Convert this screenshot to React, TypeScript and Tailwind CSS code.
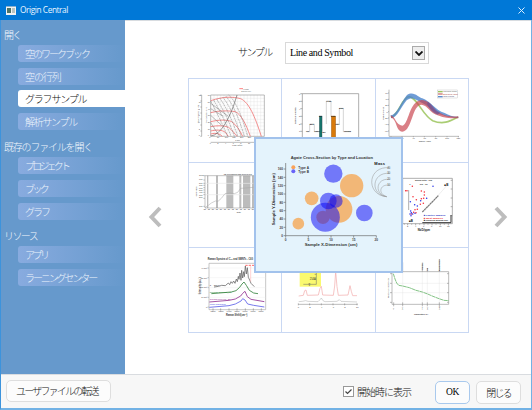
import React from 'react';

type Item = { label: string; gap: string; tracking: string; active?: boolean };

const openItems: Item[] = [
  { label: '空のワークブック', gap: 'mt-[3px]', tracking: 'tracking-[-2px]' },
  { label: '空の行列', gap: 'mt-[6px]', tracking: 'tracking-[-1.1px]' },
  { label: 'グラフサンプル', gap: 'mt-[5px]', tracking: 'tracking-[-1.2px]', active: true },
  { label: '解析サンプル', gap: 'mt-[6px]', tracking: 'tracking-[-1.3px]' },
];
const existingItems: Item[] = [
  { label: 'プロジェクト', gap: 'mt-[3px]', tracking: 'tracking-[-2.8px]' },
  { label: 'ブック', gap: 'mt-[6px]', tracking: 'tracking-[-2.6px]' },
  { label: 'グラフ', gap: 'mt-[6px]', tracking: 'tracking-[-2px]' },
];
const resourceItems: Item[] = [
  { label: 'アプリ', gap: 'mt-[3px]', tracking: 'tracking-[-2.5px]' },
  { label: 'ラーニングセンター', gap: 'mt-[6px]', tracking: 'tracking-[-2.1px]' },
];

function NavGroup({ title, items, className, tracking }: { title: string; items: Item[]; className: string; tracking: string }) {
  return (
    <section className={className}>
      <h2 className={`h-4 whitespace-nowrap pl-[3px] text-[10px] font-light leading-[17px] text-[#f2f7fc] ${tracking}`}>{title}</h2>
      {items.map((it) => (
        <div
          key={it.label}
          className={`ml-[17px] h-[17px] whitespace-nowrap rounded-l-[3px] pl-[7px] text-[10px] font-light leading-[17px] ${it.gap} ${it.tracking} ${
            it.active ? 'bg-white text-[#111]' : 'bg-linear-to-r from-[#88abdf] to-[#6699cc] text-[#edf4fc]'
          }`}
        >
          {it.label}
        </div>
      ))}
    </section>
  );
}

function Cell({ box, children }: { box: string; children?: React.ReactNode }) {
  return (
    <div className="overflow-hidden border-b border-r border-[#c9d8f3]">
      <svg viewBox={box} preserveAspectRatio="none" className="block h-full w-full" fill="none" fontFamily="Liberation Sans, Arial, sans-serif">
        {children}
      </svg>
    </div>
  );
}

function PumpChart() {
  const curves = [0, 1, 2, 3, 4, 5, 6];
  return (
    <>
      {[87, 97, 107, 117, 127, 137, 147, 157, 167, 177, 187, 197, 207, 217, 227].map((x) => <path key={x} d={`M${x} 60V184`} stroke="#ddd" />)}
      {[70, 80, 91, 101, 112, 122, 133, 143, 153, 164, 174].map((y) => <path key={y} d={`M77 ${y}H238`} stroke="#ddd" />)}
      <path d="M77 60H238V184H77ZM50 60V184M77 202H238M46 60h4M46 78h4M46 96h4M46 114h4M46 132h4M46 150h4M46 168h4M46 184h4" stroke="#777" strokeWidth="1.5" />
      <path d="M77 77C115 64 145 65 167 71C192 82 210 125 229 184M77 113C105 106 130 107 151 110C168 118 182 145 196 184M77 140C104 134 120 134 139 139C154 150 164 165 173 184M77 155C98 151 116 151 131 157C142 166 150 177 156 184M77 168C95 164 110 164 121 172L130 184M77 177Q100 171 112 184" stroke="#f07070" strokeWidth="2.4" />
      {curves.map((i) => <path key={i} d={`M${77 + (6 - i) * 9} ${60 + i * 3}Q${112 + (6 - i) * 8} ${85 + i * 10} ${128 + (6 - i) * 10} 184`} stroke="#777" strokeWidth="1.5" strokeDasharray="6 2" />)}
      <path d="M77 183Q99 181 120 147T156 60" stroke="#666" strokeWidth="2" />
      <path d="M77 101L115 124M77 121L110 151M77 143L104 184M77 85L130 124" stroke="#777" strokeWidth="1.5" />
      <path d="M163 41h11" stroke="#f44" strokeWidth="2" />
      <text x="174" y="44" fontSize="7" fill="#555">Head</text>
      <text x="169" y="51" fontSize="7" fill="#777">Efficiency</text>
      {[0, 1, 2, 3, 4, 5, 6].map((n) => (
        <g key={n} fontSize="6" fill="#444">
          <text x={73 + n * 23} y="190">{n * 50}</text>
          <text x={74 + n * 23} y="208">{n * 2}</text>
          <text x="68" y={64 + n * 20}>{60 - n * 10}</text>
          <text x="41" y={64 + n * 20}>{12 - n * 2}</text>
        </g>
      ))}
      <text x="151" y="197" fontSize="7" fill="#333" textLength="14" lengthAdjust="spacingAndGlyphs">Q (gpm)</text>
      <text x="142" y="213" fontSize="7" fill="#333" textLength="30" lengthAdjust="spacingAndGlyphs">Flow (m³/h)</text>
      <text transform="translate(42 145) rotate(-90)" fontSize="7" fill="#333" textLength="55" lengthAdjust="spacingAndGlyphs">Total Dynamic H. (m)</text>
      <text transform="translate(66 145) rotate(-90)" fontSize="7" fill="#333" textLength="48" lengthAdjust="spacingAndGlyphs">Total Dynamic H. (ft)</text>
    </>
  );
}

function SignalChart() {
  return (
    <>
      <path d="M67 186V56H236V186M61 56h6M61 79h6M61 101h6M61 124h6M61 147h6M61 169h6" stroke="#888" strokeWidth="2" />
      <path d="M80 170H89V147H103V170H118M126 124V170M139 147V78H153V124M167 147H178V100H190V170H213" stroke="#aaa" strokeWidth="1.5" />
      <rect x="118" y="123" width="8" height="64" fill="#15756b" stroke="#345" />
      <rect x="154" y="123" width="13" height="64" fill="#d87a0b" stroke="#875018" />
      <g fontSize="7.5" fontWeight="bold" fill="#222">
        <text x="78" y="172">Cy</text><text x="89" y="150">20z</text><text x="103" y="172">10by</text>
        <text x="117" y="126">20</text><text x="127" y="173">Qy</text><text x="139" y="80">Cdb</text>
        <text x="153" y="126">20a</text><text x="166" y="149">odf</text><text x="177" y="103">20n</text>
        <text x="192" y="172" textLength="21" lengthAdjust="spacingAndGlyphs">1babdd</text>
      </g>
      <text transform="translate(49 147) rotate(-90)" fontSize="7.5" fontWeight="bold" fill="#333" textLength="50" lengthAdjust="spacingAndGlyphs">Signal of 8 curves</text>
      {[6, 5, 4, 3, 2, 1].map((n, i) => <text key={n} x="57" y={59 + i * 22.5} fontSize="6.5" fill="#333">{n}</text>)}
    </>
  );
}

function RibbonChart() {
  return (
    <>
      <path d="M51 44V184H261M48 54h3M48 73h3M48 91h3M48 110h3M48 129h3M48 149h3M48 168h3M57 184v3M90 184v3M124 184v3M157 184v3M191 184v3M225 184v3M259 184v3" stroke="#777" strokeWidth="1.5" />
      <path d="M57 127C81 119 90 67 111 65C135 66 151 121 182 137C214 150 233 139 258 126" stroke="#9bc45c" strokeWidth="5" opacity=".85" />
      <path d="M56 121C75 120 86 82 105 60C126 47 139 68 151 70C174 77 190 107 218 114Q238 126 259 125L259 129Q230 128 211 120C188 116 172 94 152 85C128 72 119 65 104 76C89 94 74 130 58 130Z" fill="#4b83cc" opacity=".8" />
      <path d="M56 121C70 124 72 151 91 152C111 149 110 78 149 75C181 77 178 109 206 115Q228 127 259 124V130Q223 131 201 122C170 113 170 92 149 89C119 89 122 167 91 170C71 168 75 132 57 128Z" fill="#c9434c" opacity=".68" />
      <path d="M168 80C182 89 187 105 204 112L198 119C180 113 172 100 165 87Z" fill="#765591" opacity=".8" />
      <rect x="197" y="45" width="60" height="24" stroke="#aaa" />
      <path d="M198 50h14" stroke="#9bc45c" strokeWidth="4" /><path d="M198 57h14" stroke="#cf7777" strokeWidth="4" /><path d="M198 65h14" stroke="#5b8dd0" strokeWidth="4" />
      <text x="214" y="52" fontSize="6.5" fill="#555" textLength="41" lengthAdjust="spacingAndGlyphs">Maximus (Cold)</text>
      <text x="214" y="59" fontSize="6.5" fill="#a44" textLength="44" lengthAdjust="spacingAndGlyphs">Barbarous (Cold)</text>
      <text x="214" y="67" fontSize="6.5" fill="#557" textLength="32" lengthAdjust="spacingAndGlyphs">Total Plants</text>
      <text x="140" y="201" fontSize="7.5" fill="#222" textLength="37" lengthAdjust="spacingAndGlyphs">Shock Angle</text>
      <text transform="translate(36 134) rotate(-90)" fontSize="7.5" fill="#333" textLength="38" lengthAdjust="spacingAndGlyphs">Power/Force</text>
      {[60, 40, 20, 0, -20, -40, -60].map((n, i) => <text key={n} x="47" y={56 + i * 19} textAnchor="end" fontSize="6.5" fill="#333">{n}</text>)}
      {[0, 20, 40, 60, 80, 100, 120].map((n, i) => <text key={n} x={57 + i * 33.7} y="193" textAnchor="middle" fontSize="6.5" fill="#333">{n}</text>)}
    </>
  );
}

function BandChart() {
  return (
    <>
      {[[66, 4], [93, 6], [124, 21], [163, 6], [174, 22], [201, 9]].map(([x, w]) => <rect key={x} x={x} y="47" width={w} height="97" fill="#bcbcbc" />)}
      <path d="M60 70H205M60 104H205" stroke="#e9e9e9" strokeWidth="2" />
      <path d="M60 47H207M60 144H207M60 47V144M55 47h5M55 60h5M55 70h5M55 76h5M55 83h5M55 90h5M55 97h5M55 104h5M55 115h5M55 139h5" stroke="#888" strokeWidth="1.5" />
      <path d="M60 143L70 136L79 129L91 123L99 124L109 115L120 101L135 99L148 101L158 97L167 85L181 84L205 82" stroke="#a5a5a5" strokeWidth="1.5" />
      <text x="116" y="45" fontSize="7" fill="#111" textLength="84" lengthAdjust="spacingAndGlyphs">US Recessions with Recoveries</text>
      <text transform="translate(37 109) rotate(-90)" fontSize="7.5" fill="#333" textLength="31" lengthAdjust="spacingAndGlyphs">GDP ($bn)</text>
      <text x="155" y="158" fontSize="7" fill="#333" textLength="13" lengthAdjust="spacingAndGlyphs">Date</text>
      {[0, 1, 2, 3, 4, 5, 6, 7, 8, 9, 10, 11, 12].map((n) => <text key={n} x={56 + n * 12} y="151" fontSize="6.5" fill="#333">{n % 2 ? '65' : '50'}</text>)}
      {[49, 60, 72, 79, 86, 93, 100, 107, 115, 142].map((y, i) => <text key={y} x="42" y={y} fontSize="6" fill="#333">{10 - i}e3</text>)}
    </>
  );
}

function ScatterChart() {
  const red = [[107, 92], [111, 92], [127, 79], [129, 110], [154, 93], [163, 96], [163, 105], [161, 115], [139, 119], [154, 116], [151, 133], [160, 130], [135, 149], [142, 148], [131, 157], [138, 158], [124, 162]];
  const blue = [[189, 79], [121, 125], [134, 134], [142, 138], [152, 122], [170, 115], [122, 153], [124, 158], [120, 162], [123, 167], [128, 162], [135, 160]];
  return (
    <>
      <path d="M98 55H247V191H98M98 55V191M242 61h5M242 87h5M242 114h5M242 140h5M242 167h5M113 191v5M137 191v5M162 191v5M186 191v5M211 191v5M235 191v5M103 191v3M125 191v3M149 191v3M174 191v3M198 191v3M223 191v3M116 90V150" stroke="#888" strokeWidth="2" />
      <path d="M163 154L230 77" stroke="#ddd" strokeWidth="1.5" />
      <path d="M157 156L205 107" stroke="#777" strokeWidth="3.5" strokeDasharray="7 1" />
      {red.map(([x, y]) => <circle key={`${x}-${y}`} cx={x} cy={y} r="2.3" fill="#f52a35" />)}
      {blue.map(([x, y]) => <circle key={`${x}-${y}`} cx={x} cy={y} r="2.3" fill="#2934e8" />)}
      <text x="135" y="64" fontSize="7.5" fontWeight="bold" fill="#333" textLength="51" lengthAdjust="spacingAndGlyphs">Mixing Ratio - raw</text>
      <text x="118" y="74" fontSize="7" fontWeight="bold" fill="#333">1</text>
      <text x="149" y="74" fontSize="7" fontWeight="bold" fill="#333">0.5 - 10</text>
      <text x="223" y="77" fontSize="9" fontWeight="bold" fill="#111">■B</text>
      <text x="117" y="187" fontSize="9" fontWeight="bold" fill="#111">■B</text>
      <path d="M157 188H243V165" stroke="#333" strokeWidth="3" />
      <g fontSize="7" fontWeight="bold">
        <text x="161" y="168" fill="#2934c4" textLength="65" lengthAdjust="spacingAndGlyphs">■ Positive samples</text>
        <text x="161" y="176" fill="#e33" textLength="58" lengthAdjust="spacingAndGlyphs">■ Most samples</text>
        <text x="161" y="184" fill="#222" textLength="73" lengthAdjust="spacingAndGlyphs">■ Physical mixing line</text>
      </g>
      <text x="143" y="213" fontSize="9" fontWeight="bold" fill="#111" textLength="37" lengthAdjust="spacingAndGlyphs">Nb/Zr/ppm</text>
      {[2, 4, 6, 8, 10, 12].map((n, i) => <text key={n} x={111 + i * 24} y="201" fontSize="6.5" fill="#333">{n}</text>)}
    </>
  );
}

function SpectraChart() {
  return (
    <>
      <path d="M72 55H242V194H72ZM68 69h4M68 98h4M68 128h4M68 157h4M68 186h4" stroke="#aaa" strokeWidth="2" />
      {[69, 98, 128, 157].map((y) => <path key={y} d={`M74 ${y}H241`} stroke="#eee" strokeWidth="1.5" />)}
      {[84, 107, 132, 156, 181, 205, 229].map((x) => <path key={x} d={`M${x} 190v7`} stroke="#777" strokeWidth="1.5" />)}
      <path d="M87 126L101 124L110 121L121 122L130 114L134 119L138 110L142 115L146 108L150 115L154 102L157 110L160 94L162 103L165 84L168 106L170 76L173 99L176 80L178 95L181 63L184 87L187 68L190 97L194 105L198 115L208 125" stroke="#666" strokeWidth="2.3" />
      <path d="M79 146L139 141L153 137L164 127L171 117L177 111L184 121L193 136L206 144L219 146" stroke="#438b4c" strokeWidth="2.7" />
      <path d="M73 171L132 166L151 162L167 153L173 145L180 139L187 155L198 163L238 170" stroke="#984099" strokeWidth="2.7" />
      <path d="M73 187L132 182L151 177L168 168L173 161L180 165L188 177L206 181L238 186" stroke="#686bea" strokeWidth="2.7" />
      <path d="M181 61H211" stroke="#f44" strokeWidth="2.4" strokeDasharray="7 3" />
      <path d="M197 61V110" stroke="#faa" strokeWidth="1.5" />
      <text x="68" y="46" fontSize="8" fontWeight="bold" fill="#333" textLength="136" lengthAdjust="spacingAndGlyphs">Raman Spectra of C₆₀ and SWNTs - C60</text>
      <text x="74" y="123" fontSize="7.5" fill="#111" textLength="30" lengthAdjust="spacingAndGlyphs">T = 300 K</text>
      <text x="74" y="144" fontSize="7.5" fill="#24802e" textLength="65" lengthAdjust="spacingAndGlyphs">SWNTs-C60(18)_1g</text>
      <text x="74" y="166" fontSize="7.5" fill="#8e278f" textLength="62" lengthAdjust="spacingAndGlyphs">SWNTs-C60(18)_2g</text>
      <text x="74" y="179" fontSize="7.5" fill="#3f46e2" textLength="48" lengthAdjust="spacingAndGlyphs">Lignin Nanotubes</text>
      <text transform="translate(48 148) rotate(-90)" fontSize="8" fontWeight="bold" fill="#333" textLength="51" lengthAdjust="spacingAndGlyphs">Intensity (a.u.)</text>
      <text x="123" y="212" fontSize="8" fontWeight="bold" fill="#333" textLength="64" lengthAdjust="spacingAndGlyphs">Raman Shift/(cm⁻¹)</text>
      {[0, 1, 2, 3, 4].map((n) => <text key={n} x="67" y={72 + n * 29} textAnchor="end" fontSize="7" fill="#333">{n === 4 ? 0 : `${4 - n}×10³`}</text>)}
      {[1200, 1300, 1400, 1500, 1600, 1700, 1800].map((n, i) => <text key={n} x={84 + i * 24} y="202" textAnchor="middle" fontSize="6.5" fill="#333">{n}</text>)}
    </>
  );
}

function PeaksChart() {
  return (
    <>
      <rect x="344" y="65" width="64" height="60" fill="#faf96f" />
      <path d="M355 118H394V82M389 88h5M372 115v4" stroke="#666" strokeWidth="1.5" />
      <text x="374" y="104" fontSize="8" fill="#333">254A</text><text x="371" y="123" fontSize="8" fill="#333">2</text>
      <path d="M341 153L355 151L359 137L363 135L367 151L400 150L405 130L409 124L413 150L445 151L449 123L452 80L456 125L460 151L489 150L495 122L499 139L503 152L516 152" stroke="#f2b0b0" strokeWidth="2.2" />
      <path d="M341 170L352 169L362 167L369 169L399 170L405 164L409 159L414 167L420 170L456 169L463 164L468 169L516 171" stroke="#aaa" strokeWidth="1.5" />
      <path d="M340 178H518M340 175v6M374 175v6M409 175v6M444 175v6M479 175v6M516 175v6" stroke="#777" strokeWidth="1.5" />
      {[0, 2, 4, 6, 8, 10].map((n, i) => <text key={n} x={338 + i * 35} y="188" fontSize="7" fill="#333">{n}</text>)}
    </>
  );
}

function DecayChart() {
  return (
    <>
      <path d="M71 370H236M71 398H236M98 335V433M157 335V433M172 335V433M208 335V433" stroke="#ddd" />
      <path d="M66 335H236M66 335V433H236V335M60 341h6M60 370h6M60 398h6M60 427h6M71 427v12M98 427v12M157 427v12M172 427v12M208 427v12M98 335v-28M157 335v-25M172 335v-11M208 335v-38M231 341h5M231 370h5M231 398h5M231 427h5" stroke="#888" strokeWidth="1.7" />
      <path d="M70 341L75 357L80 369L86 376L98 378L118 383L138 391L157 396L173 402L189 409L207 416L222 421L236 422" stroke="#85c487" strokeWidth="3" strokeDasharray="12 1" />
      <text x="132" y="465" fontSize="7.5" fontWeight="bold" fill="#333" textLength="42" lengthAdjust="spacingAndGlyphs">Temperature (K)</text>
      <text transform="translate(57 414) rotate(-90)" fontSize="7.5" fill="#333" textLength="60" lengthAdjust="spacingAndGlyphs">Resistivity (Ohm·cm)</text>
      <g fontSize="7" fontWeight="bold" fill="#333">
        <text transform="translate(159 331) rotate(-90)" textLength="23" lengthAdjust="spacingAndGlyphs">77 K (N₂)</text>
        <text transform="translate(174 332) rotate(-90)">90</text>
        <text transform="translate(210 334) rotate(-90)" textLength="37" lengthAdjust="spacingAndGlyphs">Room Temp.</text>
      </g>
      {[[71, 4], [98, 20], [157, 77], [172, 90], [208, 295]].map(([x, n]) => <text key={x} transform={`translate(${x + 2} 449) rotate(-90)`} fontSize="7" fill="#333">{n}</text>)}
    </>
  );
}

function BubblePreview() {
  return (
    <div className="absolute left-[65px] top-[58px] h-[136px] w-[149px] border-2 border-[#a2c2ec] bg-[#e4f3fc]">
      <svg viewBox="18 12 435 396" preserveAspectRatio="none" className="block h-full w-full" fill="none" fontFamily="Liberation Sans, Arial, sans-serif">
        <g fill="#fa9b39" opacity=".68"><circle cx="145" cy="266" r="17.5" /><circle cx="185" cy="190" r="20.5" /><circle cx="305" cy="152" r="35" /><circle cx="267" cy="223" r="40" /><circle cx="219" cy="247" r="20" /></g>
        <g fill="#0908f6" fillOpacity=".52"><circle cx="250" cy="116" r="27.5" /><circle cx="235" cy="198" r="25" /><circle cx="258" cy="198" r="20" /><circle cx="226" cy="247" r="43.5" /><circle cx="343" cy="234" r="25" /></g>
        <path d="M107 84V302H379V308M107 302v6M175 302v6M243 302v6M311 302v6M101 302h6M101 277h6M101 252h6M101 227h6M101 202h6M101 177h6M101 152h6M101 127h6M101 102h6" stroke="#666" strokeWidth="2" />
        <g fontSize="11.5" fontWeight="bold" fill="#333">
          <text x="122" y="73" textLength="247" lengthAdjust="spacingAndGlyphs">Agate Cross-Section by Type and Location</text>
          <text x="164" y="332" textLength="158" lengthAdjust="spacingAndGlyphs">Sample X-Dimension (cm)</text>
          <text transform="translate(76 271) rotate(-90)" textLength="157" lengthAdjust="spacingAndGlyphs">Sample Y-Dimension (cm)</text>
        </g>
        <circle cx="130" cy="97" r="6" fill="#faa35a" /><circle cx="130" cy="109" r="6" fill="#6863f8" />
        <text x="145" y="101" fontSize="9.5" fontWeight="bold" fill="#333" textLength="32">Type A</text>
        <text x="145" y="113" fontSize="9.5" fontWeight="bold" fill="#333" textLength="32">Type B</text>
        {[0, 5, 10, 15, 20].map((n) => <text key={n} x={107 + n * 13.6} y="317" textAnchor="middle" fontSize="9.5" fontWeight="bold" fill="#444">{n}</text>)}
        {[0, 20, 40, 60, 80, 100, 120, 140, 160].map((n) => <text key={n} x="99" y={305.5 - n * 1.25} textAnchor="end" fontSize="9.5" fontWeight="bold" fill="#444">{n}</text>)}
        <text x="373" y="89" fontSize="12" fontWeight="bold" fill="#111" textLength="32">Mass</text>
        <g stroke="#999" strokeWidth="1.6"><path d="M418 98C350 93 348 181 410 185" /><path d="M418 115C364 111 360 180 410 185" /><path d="M418 133C376 129 373 179 410 185" /><path d="M418 150C386 148 385 178 410 185" /></g>
        {[40, 30, 20, 10].map((n, i) => <text key={n} x="412" y={101 + i * 17} fontSize="8" fill="#444">{n}</text>)}
      </svg>
    </div>
  );
}

function Chevron({ left = false }: { left?: boolean }) {
  return (
    <svg className="h-[22px] w-[14px]" viewBox="0 0 14 22" fill="none" stroke="#bdbdbd" strokeWidth="4">
      <path d={left ? 'M12 2L3.5 11l8.500 9' : 'M2 2l8.500 9-8.500 9'} />
    </svg>
  );
}

export default function App() {
  return (
    <div className="flex h-[410px] w-[532px] flex-col overflow-hidden bg-white font-['Noto_Sans_CJK_JP',sans-serif]">
      <header className="flex h-[20px] shrink-0 items-center bg-[#0078d7] pl-[6px] pr-[7px]">
        <svg className="h-[9px] w-[10px]" viewBox="0 0 10 9">
          <path fill="#f1f3f2" d="M0 0h10v9H0z" /><path fill="#4e7467" d="M1 2h4v5H1z" /><path fill="#b8c4c0" d="M6 2h3v5H6z" /><path fill="#8bb1ce" d="M0 0h10v1H0z" />
        </svg>
        <span className="ml-[4px] font-['Open_Sans','Noto_Sans',sans-serif] text-[8.300px] leading-none tracking-[-0.42px] text-[#e8f5ff]">Origin Central</span>
        <svg className="ml-auto h-[7px] w-[7px]" viewBox="0 0 7 7" stroke="#d8edff"><path d="M.5.5l6 6m0-6l-6 6" /></svg>
      </header>

      <div className="flex h-[390px] flex-col border-x border-b-2 border-l-[#3c93dc] border-r-[#72b2e5] border-b-[#72b2e5]">
        <div className="flex h-[354px] shrink-0">
          <aside className="w-[124px] shrink-0 bg-[#6699cc]">
            <NavGroup className="pt-[6px]" title="開く" items={openItems} tracking="tracking-[-1.8px]" />
            <NavGroup className="pt-[8px]" title="既存のファイルを開く" items={existingItems} tracking="tracking-[-1.2px]" />
            <NavGroup className="pt-[7px]" title="リソース" items={resourceItems} tracking="tracking-[-1.6px]" />
          </aside>

          <main className="flex flex-1 flex-col border-t border-[#d8dce0]">
            <div className="flex h-[57px] pl-[113px] pt-[21px]">
              <label className="h-[20px] w-[47px] whitespace-nowrap text-[10px] font-light leading-[19px] tracking-[-1.5px] text-[#111]">サンプル</label>
              <div className="flex h-[22px] w-[144px] items-center justify-between border border-[#d9d9d9] pl-[4px] pr-[3px]">
                <span className="font-['Liberation_Serif',serif] text-[10px] leading-none tracking-[-0.4px] text-black">Line and Symbol</span>
                <span className="flex h-[14px] w-[13px] items-center justify-center border border-[#aaa] bg-[#eee]">
                  <svg className="h-[5px] w-[8px]" viewBox="0 0 8 5" fill="none" stroke="#111" strokeWidth="1.8"><path d="M.5.5L4 4 7.5.5" /></svg>
                </span>
              </div>
            </div>
            <div className="flex pl-[23px]">
              <div className="mt-[128px] h-[22px]"><Chevron left /></div>
              <div className="relative ml-[26px] h-[255px] w-[281px] border-l border-t border-[#c9d8f3]">
                <div className="grid h-[254px] w-[280px] grid-cols-[93px_94px_93px] grid-rows-[84px_85px_85px]">
                  <Cell box="12 12 276 249"><PumpChart /></Cell>
                  <Cell box="6 12 279 249"><SignalChart /></Cell>
                  <Cell box="12 12 276 249"><RibbonChart /></Cell>
                  <Cell box="12 9 276 252"><BandChart /></Cell>
                  <Cell box="0 0 279 252" />
                  <Cell box="18 9 276 252"><ScatterChart /></Cell>
                  <Cell box="12 9 276 252"><SpectraChart /></Cell>
                  <Cell box="291 9 279 252"><PeaksChart /></Cell>
                  <Cell box="18 264 276 252"><DecayChart /></Cell>
                </div>
                <BubblePreview />
              </div>
              <div className="ml-[25px] mt-[128px] h-[22px]"><Chevron /></div>
            </div>
          </main>
        </div>

        <footer className="flex h-[34px] shrink-0 items-start border-t border-[#d9dce0] bg-[#f7f7f7] pl-[5px] pr-[10px] pt-[5px] text-[10px] font-light text-[#111]">
          <button className="h-[22px] w-[105px] whitespace-nowrap rounded-[5px] border border-[#dedede] bg-[#fcfcfc] text-left indent-[9px] leading-[18px] tracking-[-1.8px]">ユーザファイルの転送</button>
          <div className="ml-auto mt-px flex h-[20px] items-center">
            <span className="mt-px flex h-[11px] w-[11px] items-center justify-center border border-[#999] bg-white">
              <svg className="h-[6px] w-[7px]" viewBox="0 0 7 6" fill="none" stroke="#444" strokeWidth="1.2"><path d="M.5 2.5l2 2L6.5.5" /></svg>
            </span>
            <span className="ml-[3px] w-[78px] whitespace-nowrap tracking-[-1px]">開始時に表示</span>
          </div>
          <button className="mt-px flex h-[23px] w-[35px] items-center justify-center rounded-[5px] border border-[#a9c9ed] bg-[#fcfcfc] font-['Liberation_Serif',serif] text-[9.5px] font-normal tracking-[-0.4px] text-black">OK</button>
          <button className="ml-[6px] mt-px h-[23px] w-[45px] whitespace-nowrap rounded-[5px] border border-[#dedede] bg-[#fcfcfc] leading-[19px] tracking-[-1.8px]">閉じる</button>
        </footer>
      </div>
    </div>
  );
}
